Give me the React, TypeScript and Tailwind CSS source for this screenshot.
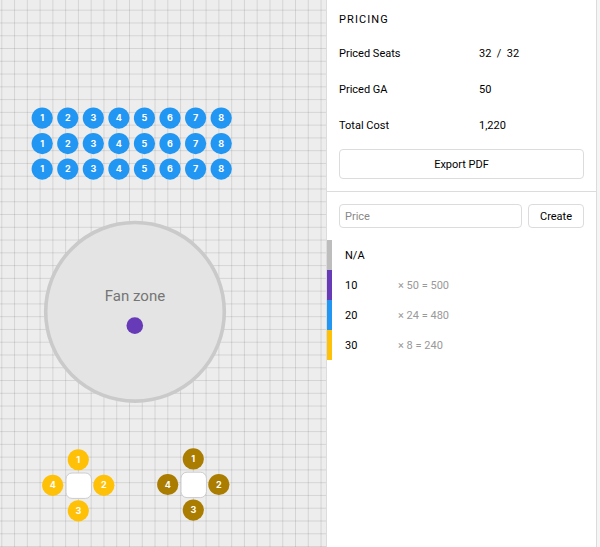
const cell = 12.77;
const step = 25.57;

const gridLines = Array.from({ length: 160 }, (_, i) => i * cell);
const rows = [118.1, 143.6, 169.1];
const rowSeats = [1, 2, 3, 4, 5, 6, 7, 8];

const tiers = [
  { price: "N/A", total: "", bar: "border-[#bdbdbd]" },
  { price: "10", total: "× 50 = 500", bar: "border-[#673ab7]" },
  { price: "20", total: "× 24 = 480", bar: "border-[#2196f3]" },
  { price: "30", total: "× 8 = 240", bar: "border-[#ffc107]" },
];

export default function App() {
  return (
    <div className="flex min-h-screen bg-[#f5f5f5] font-[Roboto,sans-serif] text-[11px] leading-4 text-black">
      <main className="relative min-w-0 flex-1 overflow-hidden bg-[#ededed]">
        <SeatMap />
      </main>
      <aside className="mr-[3px] w-[271px] border-x border-[#dcdcdc] bg-white">
        <Summary />
        <PriceForm />
        <ul>
          {tiers.map((tier) => (
            <li key={tier.price} className={`flex h-[30px] items-center border-l-[5px] pt-0.5 pl-[13px] ${tier.bar}`}>
              <span className="w-[53px]">{tier.price}</span>
              <span className="text-[#999]">{tier.total}</span>
            </li>
          ))}
        </ul>
      </aside>
    </div>
  );
}

function Summary() {
  return (
    <section className="border-b border-[#dcdcdc] p-3">
      <h2 className="mb-2 tracking-widest">PRICING</h2>
      <dl>
        <Stat label="Priced Seats" value="32 &nbsp;/ &nbsp;32" />
        <Stat label="Priced GA" value="50" />
        <Stat label="Total Cost" value="1,220" />
      </dl>
      <button className="mt-[5px] h-[30px] w-full rounded border border-[#dcdcdc] pt-0.5 hover:bg-gray-50">
        Export PDF
      </button>
    </section>
  );
}

function Stat({ label, value }: { label: string; value: string }) {
  return (
    <div className="flex h-9 items-center">
      <dt className="w-[140px]">{label}</dt>
      <dd>{value}</dd>
    </div>
  );
}

function PriceForm() {
  return (
    <form className="flex gap-[6px] p-3" onSubmit={(e) => e.preventDefault()}>
      <input
        aria-label="Price"
        placeholder="Price"
        className="h-6 min-w-0 flex-1 rounded border border-[#dcdcdc] px-[5px] outline-none placeholder:text-[#888]"
      />
      <button className="h-6 w-14 rounded border border-[#dcdcdc] pt-0.5 hover:bg-gray-50">
        Create
      </button>
    </form>
  );
}

function SeatMap() {
  return (
    <svg className="absolute inset-0 h-full w-full" aria-label="Seat map">
      {gridLines.map((d) => (
        <path key={d} d={`M${d + 1.8} 0V2000M0 ${d + 10.2}H2000`} stroke="#000" strokeOpacity="0.1" />
      ))}

      {rows.map((y) =>
        rowSeats.map((n, i) => (
          <Seat key={`${y}-${n}`} x={42.2 + i * step} y={y} label={n} color="#2196f3" />
        ))
      )}

      <circle cx="135" cy="311.8" r="89.3" fill="#e4e4e4" stroke="#cacaca" strokeWidth="3.6" />
      <text x="135" y="301" textAnchor="middle" fontSize="15" fill="#757575">
        Fan zone
      </text>
      <circle cx="134.8" cy="325.6" r="8.3" fill="#673ab7" />

      <Table x={78.3} y={485.3} color="#ffc107" />
      <Table x={193.3} y={484.5} color="#aa7c00" />
    </svg>
  );
}

function Table({ x, y, color }: { x: number; y: number; color: string }) {
  return (
    <g>
      <rect x={x - 12.3} y={y - 12.3} width="25.4" height="25.4" rx="6" fill="#fff" stroke="#ccc" />
      <Seat x={x} y={y - step} label={1} color={color} />
      <Seat x={x + step} y={y} label={2} color={color} />
      <Seat x={x} y={y + step} label={3} color={color} />
      <Seat x={x - step} y={y} label={4} color={color} />
    </g>
  );
}

function Seat({ x, y, label, color }: { x: number; y: number; label: number; color: string }) {
  return (
    <g>
      <circle cx={x} cy={y} r="10.6" fill={color} />
      <text x={x} y={y + 3} textAnchor="middle" fontSize="9" fontWeight="700" fontFamily="Inter, sans-serif" fill="#fff">
        {label}
      </text>
    </g>
  );
}
